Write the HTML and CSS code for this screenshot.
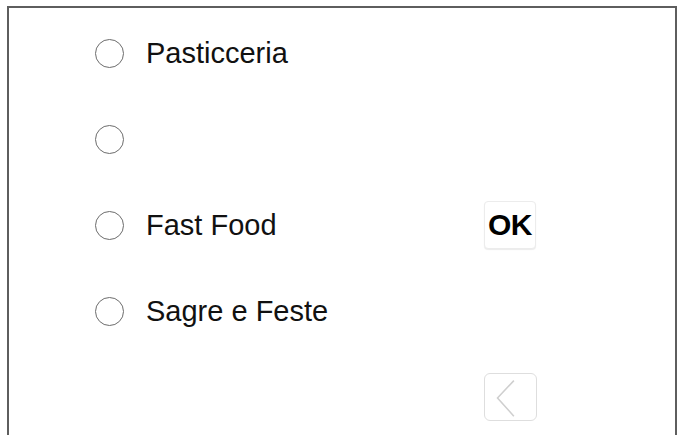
FILE: index.html
```html
<!DOCTYPE html>
<html lang="it">
<head>
    <meta charset="UTF-8">
    <meta name="viewport" content="width=device-width, initial-scale=1.0">
    <title>Categorie</title>
    <link rel="stylesheet" href="styles.css">
</head>
<body>
    <div class="frame">
        <div class="grid">
            <label class="option"><span class="radio"></span><span class="option-text">Pasticceria</span></label>
            <div></div>
            <label class="option"><span class="radio"></span><span class="option-text"></span></label>
            <div></div>
            <label class="option"><span class="radio"></span><span class="option-text">Fast Food</span></label>
            <div class="cell"><button class="ok-btn" type="button">OK</button></div>
            <label class="option"><span class="radio"></span><span class="option-text">Sagre e Feste</span></label>
            <div></div>
            <div></div>
            <div class="cell">
                <button class="back-btn" type="button" aria-label="Indietro">
                    <svg width="53" height="48" viewBox="0 0 53 48">
                        <polyline points="30,7 13,25 30,44" fill="none" stroke="#cfcfcf" stroke-width="1.6"/>
                    </svg>
                </button>
            </div>
        </div>
    </div>
</body>
</html>
```

FILE: styles.css
```css
html, body {
    height: 100%;
}

body {
    margin: 0;
    background: #fff;
    font-family: "Liberation Sans", Arial, sans-serif;
    color: #111;
    overflow: hidden;
}

.frame {
    box-sizing: border-box;
    margin: 6px 2px 0 7px;
    height: calc(100% - 6px);
    border: 2px solid #5e5e5e;
    border-bottom: none;
}

.grid {
    display: grid;
    grid-template-columns: 389px auto;
    grid-auto-rows: 86px;
    padding: 2px 0 0 86px;
}

.option {
    display: flex;
    align-items: center;
    gap: 22px;
}

.radio {
    box-sizing: border-box;
    width: 29px;
    height: 29px;
    border: 1.8px solid #6c6c6c;
    border-radius: 50%;
    flex-shrink: 0;
}

.option-text {
    font-size: 29px;
    line-height: 1;
}

.cell {
    display: flex;
    align-items: center;
}

.ok-btn {
    box-sizing: border-box;
    width: 52px;
    height: 48px;
    padding: 0;
    border: 1px solid #ececec;
    border-radius: 4px;
    background: #fff;
    box-shadow: 0 1px 1px rgba(0, 0, 0, 0.08);
    font-family: "Liberation Sans", Arial, sans-serif;
    font-weight: bold;
    font-size: 30px;
    color: #000;
    letter-spacing: -0.5px;
}

.back-btn {
    box-sizing: border-box;
    width: 53px;
    height: 48px;
    padding: 0;
    border: 1.5px solid #dedede;
    border-radius: 6px;
    background: #fff;
    display: flex;
    align-items: center;
    justify-content: center;
}

.back-btn svg {
    display: block;
}
```
